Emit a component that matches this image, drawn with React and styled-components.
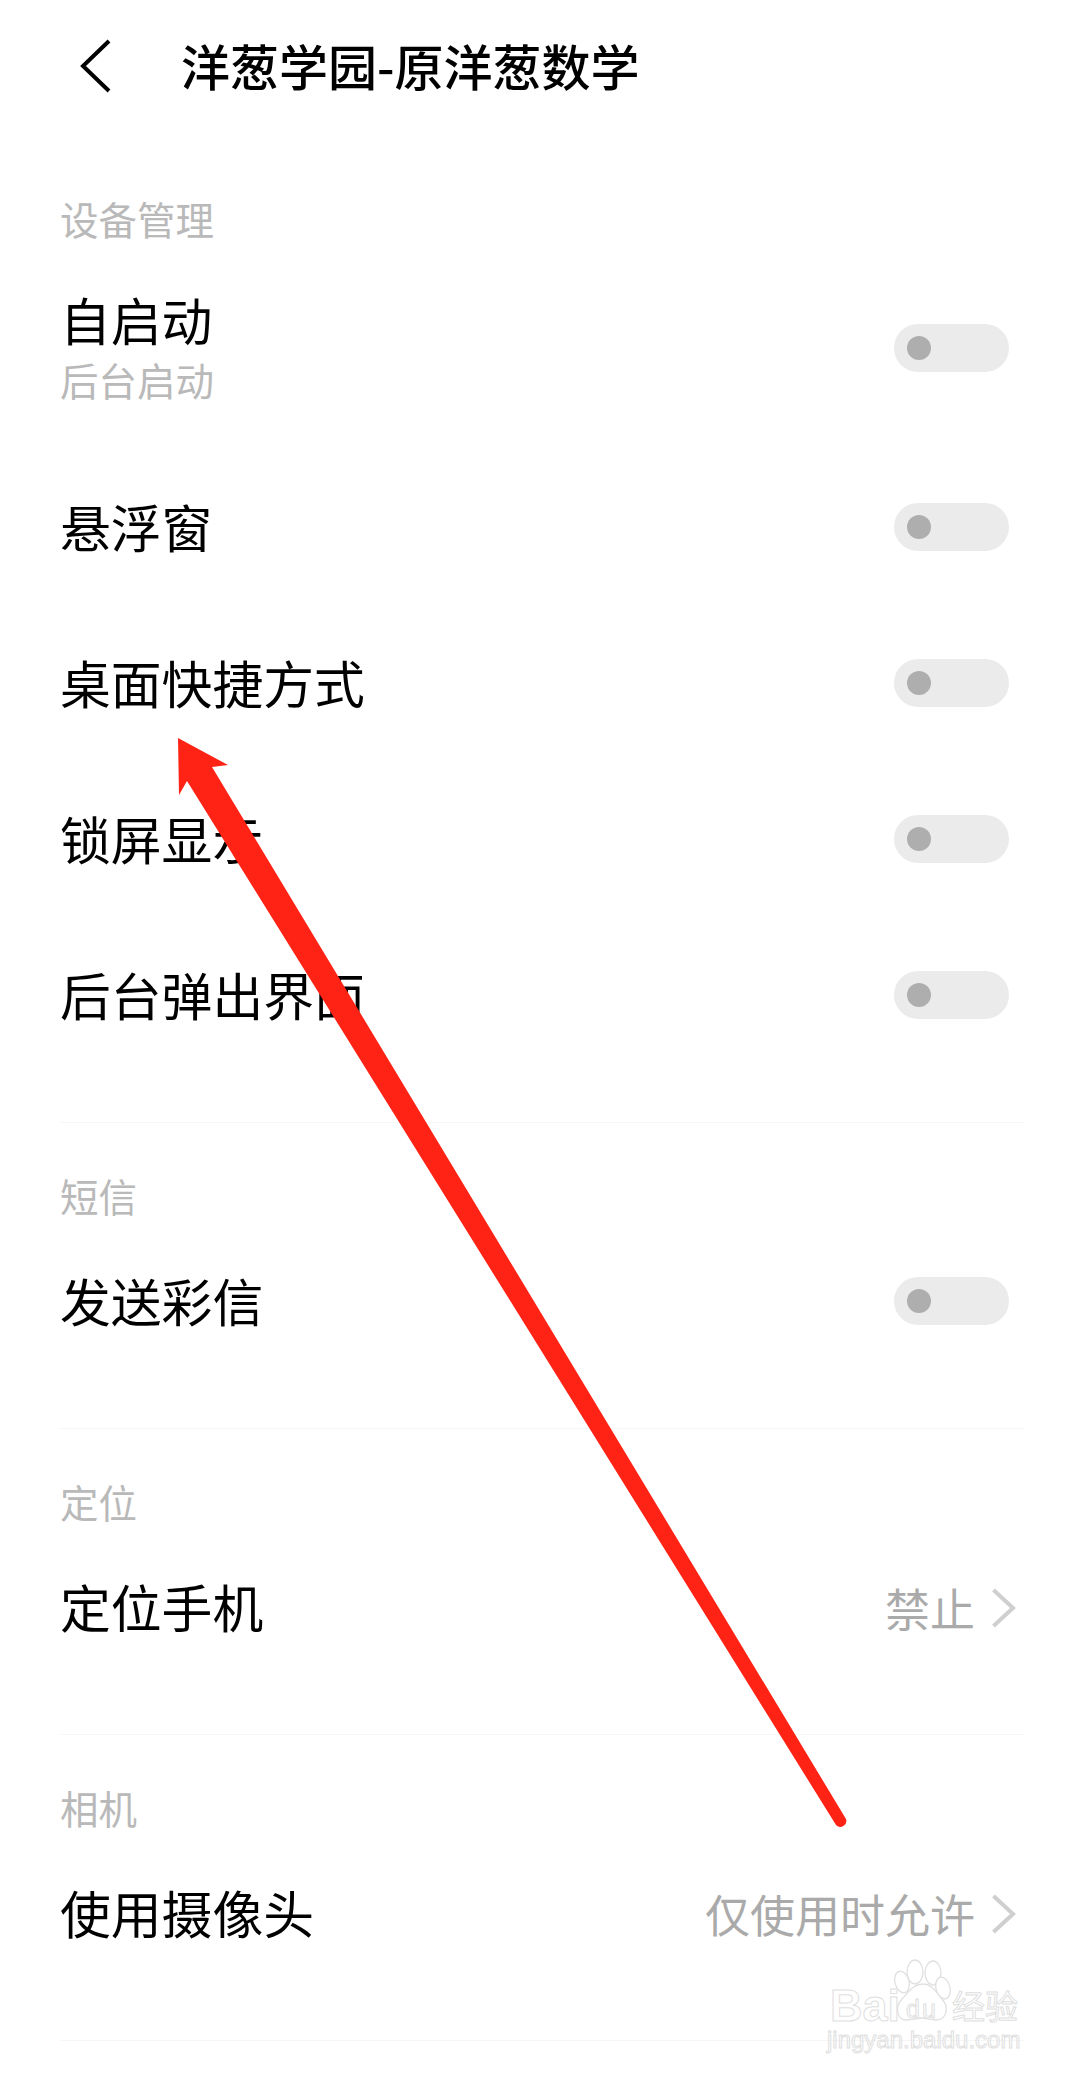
import React from "react";
import styled, { createGlobalStyle } from "styled-components";

const Global = createGlobalStyle`
  html, body { margin: 0; padding: 0; background: #fff; }
  body { font-family: "Noto Sans CJK SC", "Liberation Sans", sans-serif; }
`;

const Page = styled.div`
  position: relative;
  width: 1080px;
  height: 2075px;
  overflow: hidden;
  background: #fff;
`;

const Header = styled.header`
  height: 132px;
  display: flex;
  align-items: center;
  padding-left: 78px;
  margin-bottom: 61px;
`;

const BackIcon = styled.svg`
  width: 36px;
  height: 54px;
  margin-right: 67px;
  flex: none;
`;

const Title = styled.h1`
  margin: -2px 0 0;
  font-size: 49px;
  line-height: 60px;
  font-weight: 500;
  color: #000;
  white-space: nowrap;
`;

const Section = styled.section`
  margin: 0 56px 47px 60px;
  padding-bottom: 48px;
  border-bottom: 1px solid #f6f6f6;
`;

const SectionLabel = styled.div`
  height: 54px;
  line-height: 50px;
  font-size: 38.5px;
  color: #b9b9b9;
`;

const Row = styled.div`
  height: ${(p) => (p.$tall ? 203 : 156)}px;
  display: flex;
  align-items: center;
  justify-content: space-between;
`;

const RowText = styled.div`
  display: flex;
  flex-direction: column;
  margin-top: -4px;
`;

const RowTitle = styled.div`
  font-size: 50.8px;
  line-height: 64px;
  color: #000;
  white-space: nowrap;
`;

const RowSub = styled.div`
  font-size: 38.5px;
  line-height: 56px;
  color: #b9b9b9;
  white-space: nowrap;
`;

const Toggle = styled.div`
  width: 115px;
  height: 48px;
  margin: 0 15px 2px 0;
  border-radius: 24px;
  background: #ebebeb;
  display: flex;
  align-items: center;
  padding-left: 13px;
  box-sizing: border-box;
`;

const Knob = styled.div`
  width: 24px;
  height: 24px;
  border-radius: 50%;
  background: #aeaeae;
`;

const Value = styled.div`
  display: flex;
  align-items: center;
  margin-right: 7px;
  color: #aaa;
  font-size: 45px;
  line-height: 60px;
  white-space: nowrap;
`;

const Chevron = styled.svg`
  width: 26px;
  height: 42px;
  margin-left: 16px;
`;

const Overlay = styled.svg`
  position: absolute;
  left: 0;
  top: 0;
  width: 1080px;
  height: 2075px;
  pointer-events: none;
`;

const Watermark = styled.div`
  position: absolute;
  left: 826px;
  top: 1958px;
  width: 200px;
  height: 98px;
  color: transparent;
  -webkit-text-stroke: 1px #e0e0e0;
  font-family: "Liberation Sans", sans-serif;
`;

const Paw = styled.svg`
  position: absolute;
  left: 64px;
  top: 0;
  width: 70px;
  height: 70px;
`;

const BaiText = styled.span`
  position: absolute;
  left: 4px;
  top: 25px;
  font-size: 45px;
  line-height: 45px;
  font-weight: 700;
`;

const DuText = styled.span`
  position: absolute;
  left: 80px;
  top: 39px;
  font-size: 25px;
  line-height: 25px;
  letter-spacing: 2px;
`;

const JingText = styled.span`
  position: absolute;
  left: 126px;
  top: 27px;
  font-family: "Noto Sans CJK SC", sans-serif;
  font-size: 33px;
  line-height: 40px;
  white-space: nowrap;
`;

const UrlText = styled.span`
  position: absolute;
  left: 1px;
  top: 66px;
  font-size: 24px;
  line-height: 32px;
  white-space: nowrap;
`;

const ChevronRight = () => (
  <Chevron viewBox="0 0 26 42">
    <path d="M2.5 3 L22 21 L2.5 39" fill="none" stroke="#cfcfcf" strokeWidth="4" />
  </Chevron>
);

const ToggleRow = ({ title, sub, tall }) => (
  <Row $tall={tall}>
    <RowText>
      <RowTitle>{title}</RowTitle>
      {sub && <RowSub>{sub}</RowSub>}
    </RowText>
    <Toggle>
      <Knob />
    </Toggle>
  </Row>
);

const ValueRow = ({ title, value }) => (
  <Row>
    <RowText>
      <RowTitle>{title}</RowTitle>
    </RowText>
    <Value>
      {value}
      <ChevronRight />
    </Value>
  </Row>
);

export default function App() {
  return (
    <Page>
      <Global />
      <Header>
        <BackIcon viewBox="0 0 36 54">
          <path d="M31 2 L5 27 L31 52" fill="none" stroke="#000" strokeWidth="4" />
        </BackIcon>
        <Title>洋葱学园-原洋葱数学</Title>
      </Header>

      <Section>
        <SectionLabel>设备管理</SectionLabel>
        <ToggleRow title="自启动" sub="后台启动" tall />
        <ToggleRow title="悬浮窗" />
        <ToggleRow title="桌面快捷方式" />
        <ToggleRow title="锁屏显示" />
        <ToggleRow title="后台弹出界面" />
      </Section>

      <Section>
        <SectionLabel>短信</SectionLabel>
        <ToggleRow title="发送彩信" />
      </Section>

      <Section>
        <SectionLabel>定位</SectionLabel>
        <ValueRow title="定位手机" value="禁止" />
      </Section>

      <Section>
        <SectionLabel>相机</SectionLabel>
        <ValueRow title="使用摄像头" value="仅使用时允许" />
      </Section>

      <Overlay viewBox="0 0 1080 2075">
        <path
          d="M178 738 L228 765 L212 767 L846 1819 A6 6 0 0 1 836 1825 L187 781 L179 795 Z"
          fill="#ff2316"
        />
      </Overlay>

      <Watermark>
        <Paw viewBox="0 0 70 70">
          <g fill="#fff" stroke="#e0e0e0" strokeWidth="1.3">
            <ellipse cx="25" cy="14" rx="8" ry="12" />
            <ellipse cx="43" cy="15" rx="8" ry="12" />
            <ellipse cx="12" cy="24" rx="7" ry="11" transform="rotate(-15 12 24)" />
            <ellipse cx="53" cy="30" rx="7" ry="11" transform="rotate(-15 53 30)" />
            <path d="M33 26 C42 26 46 34 52 41 C60 50 56 62 46 62 C40 62 37 60 32 60 C27 60 23 62 17 62 C7 62 4 50 12 41 C19 34 23 26 33 26 Z" />
          </g>
        </Paw>
        <BaiText>Bai</BaiText>
        <DuText>du</DuText>
        <JingText>经验</JingText>
        <UrlText>jingyan.baidu.com</UrlText>
      </Watermark>
    </Page>
  );
}
